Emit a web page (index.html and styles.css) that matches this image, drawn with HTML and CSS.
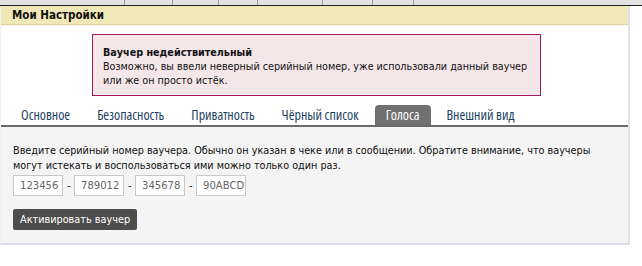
FILE: index.html
```html
<!DOCTYPE html>
<html lang="ru">
<head>
<meta charset="utf-8">
<link rel="stylesheet" href="styles.css">
</head>
<body>
<div class="topbar">
  <span class="seg s1"></span><span class="seg s2"></span><span class="seg s3"></span><span class="seg s4"></span><span class="seg s5"></span><span class="seg s6"></span><span class="seg s7"></span><span class="seg s8"></span>
</div>
<div class="panel">
  <div class="panel-head">Мои Настройки</div>
  <div class="panel-top">
    <div class="alert">
      <div class="alert-title">Ваучер недействительный</div>
      <div class="alert-text">Возможно, вы ввели неверный серийный номер, уже использовали данный ваучер или же он просто истёк.</div>
    </div>
    <ul class="tabs">
      <li class="tab">Основное</li>
      <li class="tab">Безопасность</li>
      <li class="tab">Приватность</li>
      <li class="tab">Чёрный список</li>
      <li class="tab active">Голоса</li>
      <li class="tab">Внешний вид</li>
    </ul>
  </div>
  <div class="panel-body">
    <p class="intro">Введите серийный номер ваучера. Обычно он указан в чеке или в сообщении. Обратите внимание, что ваучеры могут истекать и воспользоваться ими можно только один раз.</p>
    <div class="code-row">
      <input class="code" type="text" placeholder="123456">
      <span class="dash">-</span>
      <input class="code" type="text" placeholder="789012">
      <span class="dash">-</span>
      <input class="code" type="text" placeholder="345678">
      <span class="dash">-</span>
      <input class="code" type="text" placeholder="90ABCD">
    </div>
    <button class="btn" type="button">Активировать ваучер</button>
  </div>
</div>
</body>
</html>
```
FILE: styles.css
```css
* { box-sizing: border-box; }
html, body { margin: 0; padding: 0; background: #ffffff; }
body { width: 642px; height: 266px; overflow: hidden; font-family: "DejaVu Sans Condensed", "DejaVu Sans", sans-serif; color: #222; }

.topbar {
  height: 6px;
  background: #e2e2e2;
  border-bottom: 1px solid #222;
  display: flex;
  overflow: hidden;
}
.seg { height: 5px; border-right: 1px solid #9a9a9a; }
.s1 { width: 125px; }
.s2 { width: 48px; }
.s3 { width: 46px; }
.s4 { width: 39px; }
.s5 { width: 65px; }
.s6 { width: 50px; }
.s7 { width: 41px; }
.s8 { flex: 1; border-right: 0; }

.panel {
  width: 630px;
  border-right: 2px solid #dde3ea;
  border-bottom: 2px solid #d9dee6;
  border-left: 1px solid #eef1f4;
}
.panel-head {
  height: 19px;
  background: #f1e8b8;
  border-bottom: 1px solid #e2d59a;
  padding-left: 11px;
  font-weight: bold;
  font-size: 11.5px;
  line-height: 19px;
  color: #111;
}
.panel-top {
  background: #fff;
  padding-top: 8px;
  border-top: 1px solid #f4f4f4;
}
.alert {
  margin-left: 91px;
  width: 449px;
  height: 62px;
  background: #f5e6ea;
  border: 1px solid #a5185b;
  padding: 11px 10px 0 10px;
  font-size: 10.7px;
  line-height: 14px;
  color: #111;
}
.alert-title { font-weight: bold; }

.tabs {
  list-style: none;
  margin: 9px 0 0 0;
  padding: 0 0 0 9px;
  display: flex;
  gap: 5px;
  border-bottom: 2px solid #6b6b6b;
  height: 22px;
}
.tab {
  padding: 0 11px;
  height: 20px;
  line-height: 20px;
  font-family: "Open Sans", sans-serif;
  font-stretch: 75%;
  font-size: 14px;
  color: #1d3f63;
  border-radius: 4px 4px 0 0;
}
.tab.active {
  background: #707070;
  color: #fff;
}

.panel-body {
  background: #f4f4f4;
  padding: 16px 12px 0 12px;
  height: 116px;
  font-size: 10.75px;
  color: #111;
}
.intro {
  margin: 0;
  line-height: 15px;
  width: 604px;
}
.code-row {
  display: flex;
  align-items: center;
  margin-top: 2px;
  gap: 4px;
}
.code {
  width: 50px;
  height: 21px;
  border: 1px solid #c8c8c8;
  background: #fff;
  padding: 0 0 0 6px;
  font-family: "DejaVu Sans Condensed", "DejaVu Sans", sans-serif;
  font-size: 11.2px;
  color: #555;
}
.code::placeholder { color: #666; opacity: 1; }
.dash { font-size: 11px; color: #222; width: 3px; text-align: center; }
.btn {
  display: block;
  margin-top: 13px;
  height: 21px;
  padding: 0 7px;
  border: 0;
  border-radius: 2px;
  background: #4d4d4d;
  color: #fff;
  font-family: "DejaVu Sans Condensed", "DejaVu Sans", sans-serif;
  font-size: 10.8px;
}
```
